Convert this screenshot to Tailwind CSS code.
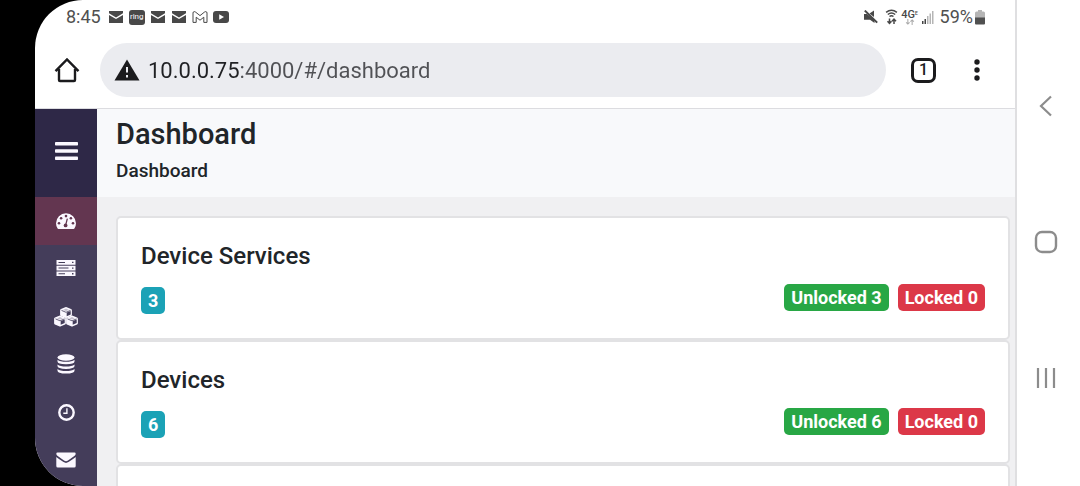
<!DOCTYPE html>
<html lang="en">
<head>
<meta charset="utf-8">
<meta name="viewport" content="width=device-width, initial-scale=1">
<title>Dashboard</title>
<script src="https://cdn.jsdelivr.net/npm/@tailwindcss/browser@4"></script>
</head>
<body class="bg-black font-[Roboto,sans-serif] text-[#212529]">
<div class="flex h-screen overflow-hidden rounded-l-[48px] bg-white ml-[35px]">
  <div class="flex min-w-0 flex-1 flex-col border-r-2 border-[#dfdfe1]">

    <!-- Status bar -->
    <div class="flex h-[34px] shrink-0 items-center justify-between pl-[31px] pr-[30px] text-[#505050]">
      <div class="flex items-center gap-[5px]">
        <span class="mr-0.5 text-lg leading-6">8:45</span>
        <svg class="h-3 w-4" viewBox="0 0 15 12" fill="#484848"><path d="M.5 0h14v2.200L7.500 6.400.5 2.200zM.5 4l7 4 7-4v8H.5z"/></svg>
        <span class="flex h-[15px] w-4 items-center justify-center rounded-[3px] bg-[#484848] text-[8px] leading-none text-white">ring</span>
        <svg class="h-3 w-4" viewBox="0 0 15 12" fill="#484848"><path d="M.5 0h14v2.200L7.500 6.400.5 2.200zM.5 4l7 4 7-4v8H.5z"/></svg>
        <svg class="h-3 w-4" viewBox="0 0 15 12" fill="#484848"><path d="M.5 0h14v2.200L7.500 6.400.5 2.200zM.5 4l7 4 7-4v8H.5z"/></svg>
        <svg class="h-3 w-4" viewBox="0 0 16 12" fill="none" stroke="#484848" stroke-linejoin="round"><path d="M1 11.400V2Q1 .7 2.200.6 3 .6 3.700 1.200L8 4.600l4.300-3.400q.7-.6 1.500-.6Q15 .7 15 2v9.400h-3.200V6.200L8 9.200l-3.800-3v5.200z"/></svg>
        <svg class="h-3 w-4" viewBox="0 0 16 12"><rect width="16" height="12" rx="3" fill="#484848"/><path d="M6.200 3.300v5.400L11 6z" fill="#fff"/></svg>
      </div>
      <div class="flex items-center gap-[3px]">
        <svg class="mr-1 size-[14px]" viewBox="0 0 14 14" fill="#484848"><path d="M0 4h3L10.500 10v3L6 9.700H0z"/><path d="M5.500 3.500 10 .5v6.400z"/><path d="m.8.600 12.400 12" stroke="#484848" stroke-width="2"/></svg>
        <svg class="h-4 w-[13px]" viewBox="0 0 12 16" fill="none" stroke="#484848" stroke-width="1.500"><path d="M.6 3.300Q6-1 11.400 3.300M2.300 5.500Q6 2.700 9.700 5.500M4 7.500q2-1.500 4 0"/><path d="M4 9.500v5M2 12.300l2 2.200 2-2.200M8.500 15v-5M6.500 12.200l2-2.200 2 2.200"/></svg>
        <div class="flex w-[18px] flex-col items-center">
          <span class="flex text-[11px] font-medium leading-[9px] text-[#484848]">4G<span class="text-[5px] leading-[6px]">E</span></span>
          <svg class="h-[6px] w-3" viewBox="0 0 12 7" fill="none" stroke="#aaa" stroke-width="1.200"><path d="M3.500 0v6M1.500 4l2 2 2-2M8.500 7V1M6.500 3l2-2 2 2"/></svg>
        </div>
        <svg class="h-[13px] w-3" viewBox="0 0 12 13"><path d="M0 10h1.500v3H0z" fill="#444"/><path d="M2.500 8H4v5H2.500z" fill="#444"/><path d="M5 5h1.500v8H5zM7.500 2.500H9V13H7.500zM10 0h1.500v13H10z" fill="#b5b5b5"/></svg>
        <span class="ml-[3px] flex items-center gap-0.5 text-lg leading-6">59%<svg class="h-[15px] w-[10px]" viewBox="0 0 10 15"><path d="M3 0h4v1.500h1.500Q10 1.500 10 3v5H0V3q0-1.500 1.500-1.500H3z" fill="#b5b5b5"/><path d="M0 7.500h10v6q0 1-1 1H1q-1 0-1-1z" fill="#505050"/></svg></span>
      </div>
    </div>

    <!-- Browser toolbar -->
    <div class="flex h-[75px] shrink-0 items-center border-b border-[#dcdce0] pl-[19px] pr-[25px] pb-0.5">
      <button aria-label="Home" class="mr-5 shrink-0"><svg class="size-[26px]" viewBox="0 0 26 26" fill="none" stroke="#1b1b1d" stroke-width="2.400"><path d="M5 12v11q0 1 1 1h14q1 0 1-1V12M1.500 14.200 13 2.500l11.500 11.700"/></svg></button>
      <label class="flex h-[54px] flex-1 items-center gap-2 rounded-full bg-[#ebecf0] pl-[14px] pr-6">
        <svg class="h-[22px] w-[26px] shrink-0" viewBox="0 0 26 22"><path d="M13 .5 25.500 21.500H.5z" fill="#1b1b1d"/><path d="M12 8h2v5.500h-2zM12 16h2v2.500h-2z" fill="#ebecf0"/></svg>
        <input aria-label="Address" type="text" value="10.0.0.75:4000/#/dashboard" class="min-w-0 flex-1 bg-[linear-gradient(90deg,#202124_91px,#505155_91px)] bg-clip-text text-[22px] text-transparent outline-none">
      </label>
      <button aria-label="Open tabs" class="ml-[25px] flex size-[25px] items-center justify-center rounded-[7px] border-[3px] border-[#1b1b1d] text-base font-medium leading-none text-[#1b1b1d]">1</button>
      <button aria-label="Browser menu" class="ml-[28px]"><svg class="h-6 w-[26px]" viewBox="0 0 26 24" fill="#1b1b1d"><circle cx="13" cy="4" r="2.700"/><circle cx="13" cy="12" r="2.700"/><circle cx="13" cy="20" r="2.700"/></svg></button>
    </div>

    <!-- Application -->
    <div class="flex min-h-0 flex-1">
      <nav class="flex w-[62px] shrink-0 flex-col bg-[#443d5a] text-[#fbf8ff]">
        <button aria-label="Toggle menu" class="flex h-[88px] shrink-0 items-center justify-center bg-[#2e2847]">
          <svg class="mb-1 h-5 w-[23px]" viewBox="0 0 23 20" fill="currentColor"><rect width="23" height="3.600" y="1" rx=".8"/><rect width="23" height="3.600" y="8.200" rx=".8"/><rect width="23" height="3.600" y="15.400" rx=".8"/></svg>
        </button>
        <a href="#/dashboard" aria-label="Dashboard" class="flex h-12 shrink-0 items-center justify-center bg-[#633650]">
          <svg class="h-4 w-5" viewBox="0 0 20 16"><path d="M1.600 15.500A9.700 9.700 0 0 1 0 10.200a10 10 0 0 1 20 0q0 3-1.600 5.300-.3.400-.8.400H2.400q-.5 0-.8-.4z" fill="currentColor"/><g fill="#633650"><circle cx="3" cy="10.200" r="1.300"/><circle cx="5.100" cy="5.200" r="1.300"/><circle cx="10" cy="3.100" r="1.300"/><circle cx="14.900" cy="5.200" r="1.300"/><circle cx="17" cy="10.200" r="1.300"/><circle cx="9.600" cy="12.400" r="1.900"/></g><path d="m9.700 12 1.500-6" stroke="#633650" stroke-width="1.200" stroke-linecap="round"/></svg>
        </a>
        <a href="#/services" aria-label="Device services" class="flex h-12 shrink-0 items-center justify-center pb-0.5">
          <svg class="h-4 w-5" viewBox="0 0 20 16"><path d="M.5 0h19v4.700H.5zM.5 5.700h19v4.700H.5zM.5 11.400h19V16H.5z" fill="currentColor"/><path d="M2.500 1.900H9v1H2.500zM2.500 7.600h10v1h-10zM2.500 13.200H9v1H2.500zM16 1.700h1.500V3H16zM16 7.400h1.500v1.300H16zM16 13.100h1.500v1.300H16z" fill="#443d5a"/></svg>
        </a>
        <a href="#/devices" aria-label="Devices" class="flex h-12 shrink-0 items-center justify-center">
          <svg class="h-5 w-6" viewBox="0 0 24 20" fill="currentColor">
            <defs><g id="cube"><path d="M6 0q.4 0 .8.200l4.200 1.700q.9.400.9 1.300v4.500q0 .8-.8 1.200l-4.200 1.900q-.9.400-1.800 0L.9 8.900Q.1 8.500.1 7.700V3.200q0-.9.9-1.300L5.200.2Q5.600 0 6 0z"/><path d="M1.500 3.400 6 5.300l4.500-1.900" fill="none" stroke="#443d5a" stroke-width=".8"/><path d="M6.700 5.600 10.700 3.900v3.500L6.700 9.200z" fill="#443d5a"/><path d="M3 2.900 6 1.600l3 1.300-3 1.200z" fill="#443d5a" fill-opacity=".3"/></g></defs>
            <use href="#cube" x="6"/><use href="#cube" x="0" y="8.500"/><use href="#cube" x="12" y="8.500"/>
          </svg>
        </a>
        <a href="#/data" aria-label="Data center" class="flex h-12 shrink-0 items-center justify-center pb-0.5">
          <svg class="h-5 w-[18px]" viewBox="0 0 18 20" fill="currentColor"><ellipse cx="9" cy="3.500" rx="8.500" ry="3.300"/><path id="disk" d="M.5 5.800Q3 7.800 9 7.800t8.500-2v1.700q0 2.800-8.500 2.800T.5 7.500z"/><use href="#disk" y="4.600"/><use href="#disk" y="9.200"/></svg>
        </a>
        <a href="#/scheduler" aria-label="Scheduler" class="flex h-12 shrink-0 items-center justify-center pb-0.5">
          <svg class="size-[17px]" viewBox="0 0 17 17" fill="none" stroke="currentColor"><circle cx="8.500" cy="8.500" r="7.200" stroke-width="2.400"/><path d="M8.900 4.200v5H5.300" stroke-width="1.400"/></svg>
        </a>
        <a href="#/notifications" aria-label="Notifications" class="flex h-12 shrink-0 items-center justify-center pb-0.5">
          <svg class="h-4 w-5" viewBox="0 0 20 16" fill="currentColor"><path d="M1.500.5h17q1.200 0 1.200 1.300 0 1.300-1.400 2.300L12 8.500Q10 10 8 8.500L1.700 4.100Q.3 3 .3 1.800.3.500 1.500.5z"/><path d="M.3 5q.3.400 7.200 5.100 2.500 1.600 5 0Q19.400 5.400 19.700 5v9q0 1.500-1.500 1.500H1.800Q.3 15.500.3 14z"/></svg>
        </a>
      </nav>

      <main class="flex min-w-0 flex-1 flex-col bg-[#f0f0f2]">
        <header class="h-[88px] shrink-0 bg-[#f8f9fb] px-[19px] pt-2">
          <h1 class="text-[29px] font-medium leading-[34px]">Dashboard</h1>
          <p class="mt-2 text-[19px] font-medium leading-6">Dashboard</p>
        </header>
        <div class="pl-[19px] pr-[5px] pt-[19px]">
          <section class="h-[124px] rounded-[5px] border-2 border-[#e2e2e4] bg-white px-[23px] pt-6">
            <h2 class="text-2xl font-medium leading-7">Device Services</h2>
            <div class="mt-[14px] flex items-start justify-between">
              <span class="mt-[3px] rounded-[5px] bg-[#1ba2b6] px-[7px] text-lg font-bold leading-[27px] text-white">3</span>
              <div class="flex gap-[9px] text-lg font-bold leading-[27px] text-white"><span class="rounded-[5px] bg-[#28a745] px-[7px]">Unlocked 3</span><span class="rounded-[5px] bg-[#dc3848] px-[7px]">Locked 0</span></div>
            </div>
          </section>
          <section class="h-[124px] rounded-[5px] border-2 border-[#e2e2e4] bg-white px-[23px] pt-6">
            <h2 class="text-2xl font-medium leading-7">Devices</h2>
            <div class="mt-[14px] flex items-start justify-between">
              <span class="mt-[3px] rounded-[5px] bg-[#1ba2b6] px-[7px] text-lg font-bold leading-[27px] text-white">6</span>
              <div class="flex gap-[9px] text-lg font-bold leading-[27px] text-white"><span class="rounded-[5px] bg-[#28a745] px-[7px]">Unlocked 6</span><span class="rounded-[5px] bg-[#dc3848] px-[7px]">Locked 0</span></div>
            </div>
          </section>
          <section class="h-[124px] rounded-[5px] border-2 border-[#e2e2e4] bg-white"></section>
        </div>
      </main>
    </div>
  </div>

  <!-- System navigation -->
  <nav class="flex w-[63px] shrink-0 flex-col items-center justify-between pb-24 pt-[94px] pr-[5px]">
    <button aria-label="Back"><svg class="h-6 w-6" viewBox="0 0 24 24" fill="none" stroke="#8c8c8c" stroke-width="2.200"><path d="M17 2.500 7 12l10 9.500"/></svg></button>
    <button aria-label="Home screen"><svg class="h-6 w-6" viewBox="0 0 24 24" fill="none" stroke="#8c8c8c" stroke-width="2.400"><rect x="2" y="2" width="20" height="20" rx="6"/></svg></button>
    <button aria-label="Recent apps"><svg class="h-6 w-6" viewBox="0 0 24 24" stroke="#8c8c8c" stroke-width="2.200"><path d="M4 2v20M12 2v20M20 2v20"/></svg></button>
  </nav>
</div>
</body>
</html>
